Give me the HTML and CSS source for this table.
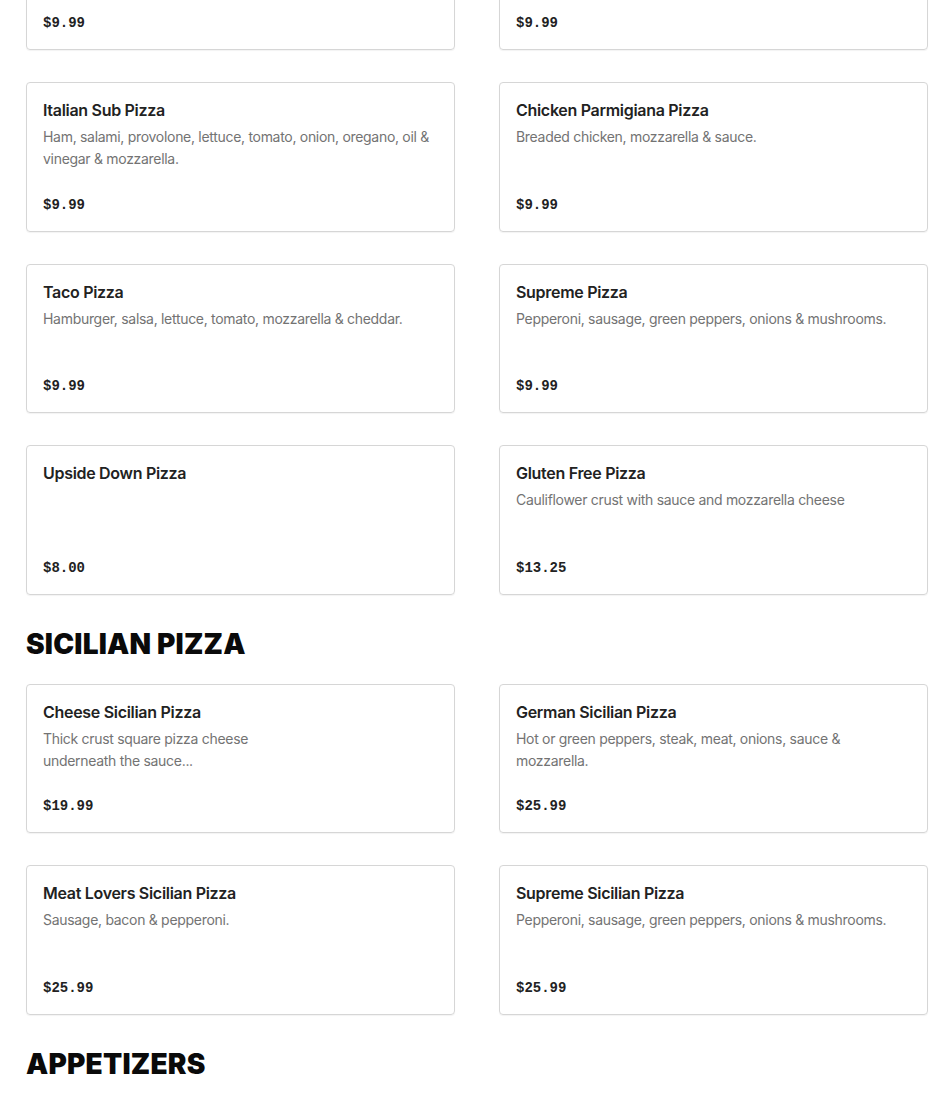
FILE: index.html
```html
<!DOCTYPE html>
<html lang="en">
<head>
<meta charset="utf-8">
<title>Menu</title>
<link rel="stylesheet" href="styles.css">
</head>
<body>
<main class="menu">
  <section class="section section-first">
    <div class="grid">
      <article class="card">
        <h3 class="card-title">Meat Lovers Pizza</h3>
        <p class="card-desc">Sausage, bacon &amp; pepperoni.</p>
        <p class="card-price">$9.99</p>
      </article>
      <article class="card">
        <h3 class="card-title">Veggie Pizza</h3>
        <p class="card-desc">Peppers, onions, mushrooms &amp; olives.</p>
        <p class="card-price">$9.99</p>
      </article>
      <article class="card">
        <h3 class="card-title">Italian Sub Pizza</h3>
        <p class="card-desc">Ham, salami, provolone, lettuce, tomato, onion, oregano, oil &amp; vinegar &amp; mozzarella.</p>
        <p class="card-price">$9.99</p>
      </article>
      <article class="card">
        <h3 class="card-title">Chicken Parmigiana Pizza</h3>
        <p class="card-desc">Breaded chicken, mozzarella &amp; sauce.</p>
        <p class="card-price">$9.99</p>
      </article>
      <article class="card">
        <h3 class="card-title">Taco Pizza</h3>
        <p class="card-desc">Hamburger, salsa, lettuce, tomato, mozzarella &amp; cheddar.</p>
        <p class="card-price">$9.99</p>
      </article>
      <article class="card">
        <h3 class="card-title">Supreme Pizza</h3>
        <p class="card-desc">Pepperoni, sausage, green peppers, onions &amp; mushrooms.</p>
        <p class="card-price">$9.99</p>
      </article>
      <article class="card">
        <h3 class="card-title">Upside Down Pizza</h3>
        <p class="card-price">$8.00</p>
      </article>
      <article class="card">
        <h3 class="card-title">Gluten Free Pizza</h3>
        <p class="card-desc">Cauliflower crust with sauce and mozzarella cheese</p>
        <p class="card-price">$13.25</p>
      </article>
    </div>
  </section>

  <section class="section">
    <h2 class="section-title">SICILIAN PIZZA</h2>
    <div class="grid">
      <article class="card">
        <h3 class="card-title">Cheese Sicilian Pizza</h3>
        <p class="card-desc">Thick crust square pizza cheese<br>underneath the sauce...</p>
        <p class="card-price">$19.99</p>
      </article>
      <article class="card">
        <h3 class="card-title">German Sicilian Pizza</h3>
        <p class="card-desc">Hot or green peppers, steak, meat, onions, sauce &amp; mozzarella.</p>
        <p class="card-price">$25.99</p>
      </article>
      <article class="card">
        <h3 class="card-title">Meat Lovers Sicilian Pizza</h3>
        <p class="card-desc">Sausage, bacon &amp; pepperoni.</p>
        <p class="card-price">$25.99</p>
      </article>
      <article class="card">
        <h3 class="card-title">Supreme Sicilian Pizza</h3>
        <p class="card-desc">Pepperoni, sausage, green peppers, onions &amp; mushrooms.</p>
        <p class="card-price">$25.99</p>
      </article>
    </div>
  </section>

  <section class="section">
    <h2 class="section-title">APPETIZERS</h2>
  </section>
</main>
</body>
</html>
```

FILE: styles.css
```css
* {
  box-sizing: border-box;
}

html, body {
  margin: 0;
  padding: 0;
  background: #ffffff;
}

body {
  font-family: Inter, "Liberation Sans", Arial, sans-serif;
  color: #1f1f1f;
  overflow: hidden;
}

.menu {
  width: 902px;
  margin-left: 26px;
  margin-top: -99.5px;
}

.section {
  padding-top: 32px;
}

.section-first {
  padding-top: 0;
}

.section-title {
  margin: 0 0 23px;
  font-family: Inter, "Liberation Sans", Arial, sans-serif;
  font-weight: 900;
  font-size: 28px;
  line-height: 34px;
  letter-spacing: 0.2px;
  color: #0a0a0a;
}

.grid {
  display: grid;
  grid-template-columns: 1fr 1fr;
  column-gap: 44px;
  row-gap: 32px;
}

.card {
  height: 149.5px;
  border: 1px solid #d6d6d6;
  border-radius: 4px;
  box-shadow: 0 1px 1px rgba(0, 0, 0, 0.05);
  padding: 15px 16px 14px 16px;
  display: flex;
  flex-direction: column;
}

.card-title {
  margin: 0;
  font-size: 16px;
  font-weight: 600;
  line-height: 24px;
  letter-spacing: -0.3px;
  color: #222222;
}

.card-desc {
  margin: 4px 0 0;
  font-size: 14px;
  line-height: 22px;
  letter-spacing: -0.3px;
  color: #737373;
}

.card-price {
  margin: auto 0 0;
  font-family: "Liberation Mono", "DejaVu Sans Mono", monospace;
  font-weight: 700;
  font-size: 14px;
  line-height: 24px;
  color: #222222;
}
```
